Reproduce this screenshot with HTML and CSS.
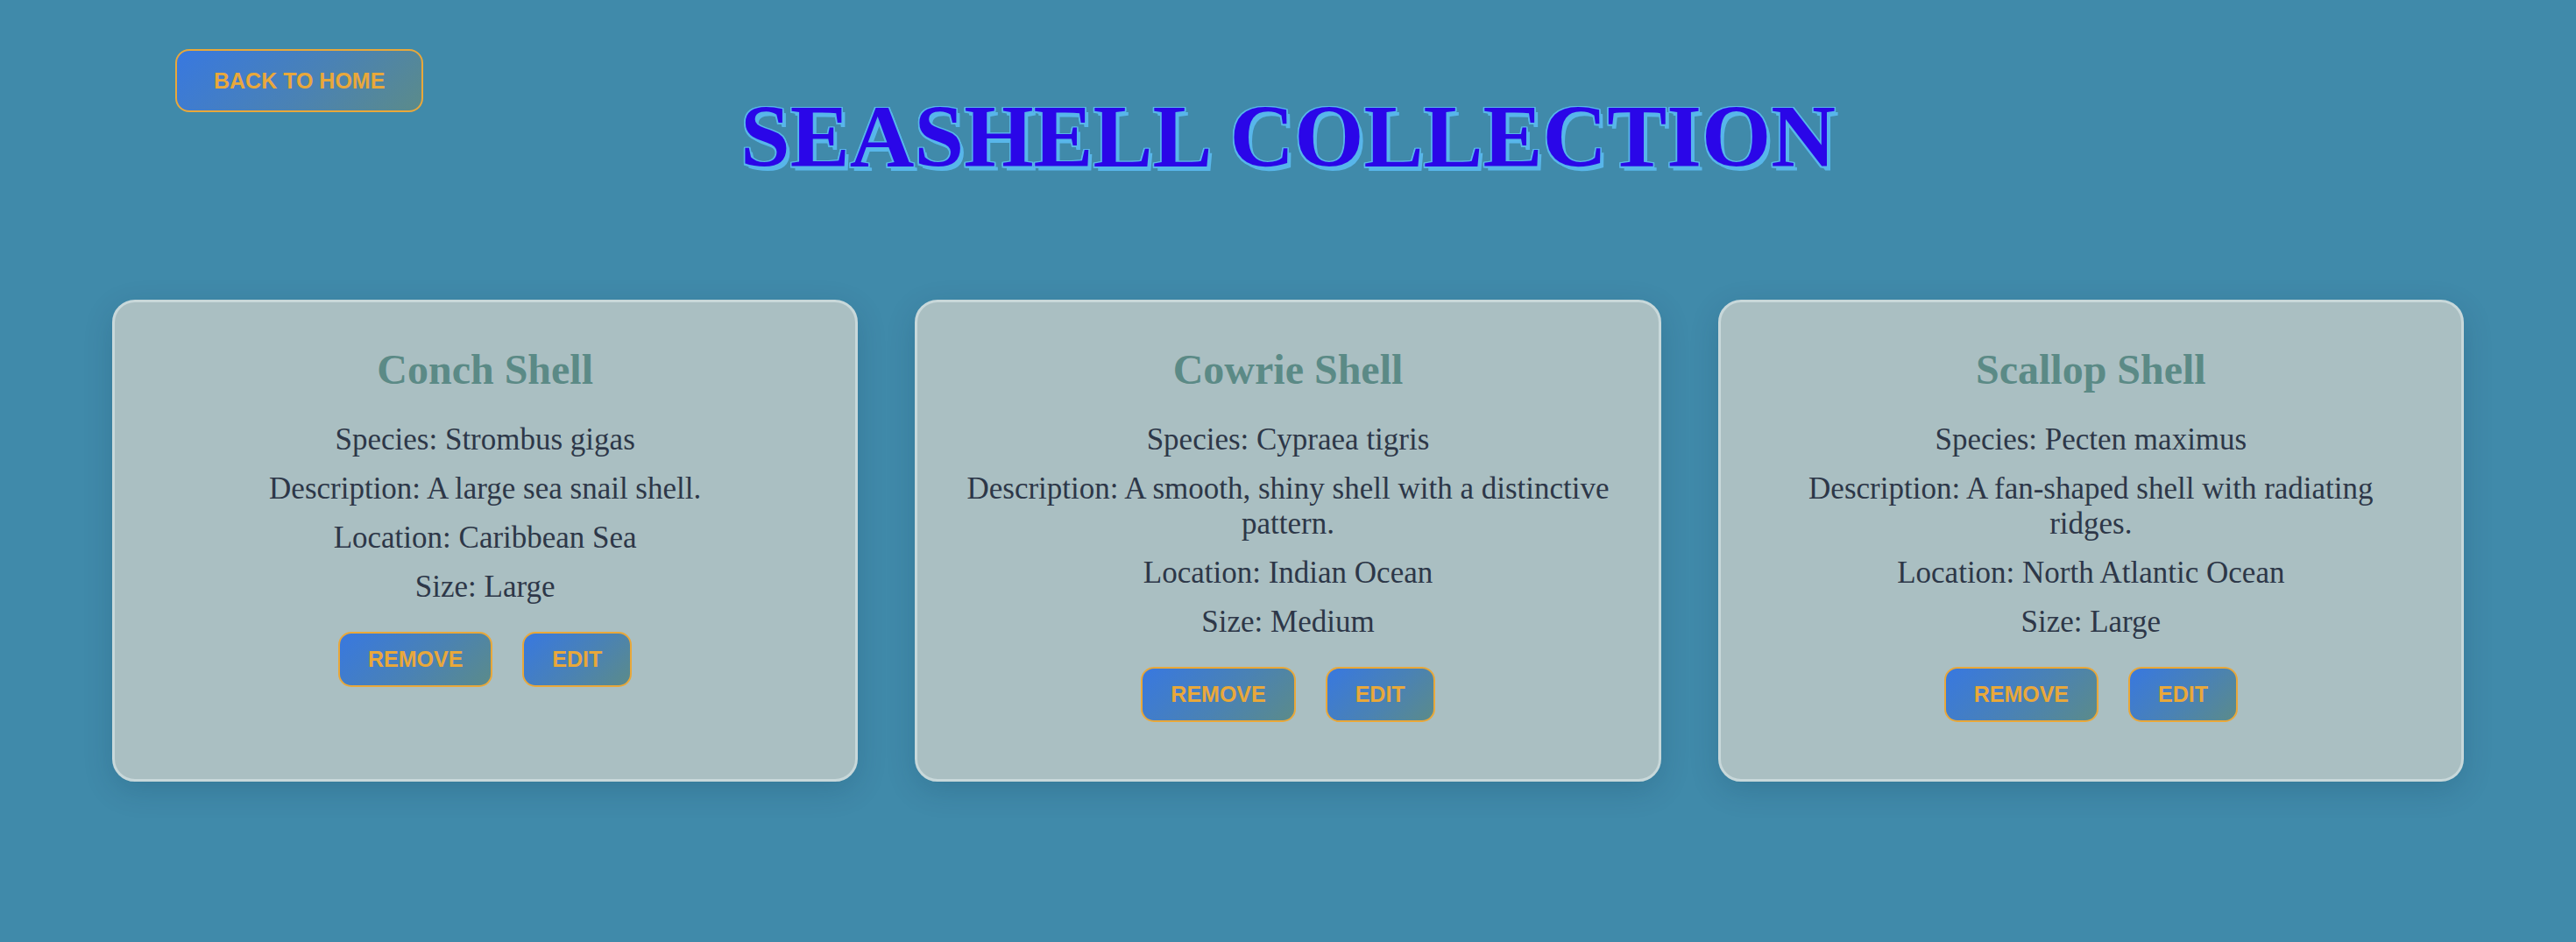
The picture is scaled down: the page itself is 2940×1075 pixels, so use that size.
FILE: index.html
```html
<!DOCTYPE html>
<html lang="en">
<head>
<meta charset="utf-8">
<title>Seashell Collection</title>
<link rel="stylesheet" href="styles.css">
</head>
<body>
<a class="back-btn" href="#">BACK TO HOME</a>
<header class="hero">
  <h1 class="hero-title">SEASHELL COLLECTION</h1>
</header>
<main class="shell-grid">
  <article class="shell-card">
    <h2 class="shell-name">Conch Shell</h2>
    <p class="shell-line">Species: Strombus gigas</p>
    <p class="shell-line">Description: A large sea snail shell.</p>
    <p class="shell-line">Location: Caribbean Sea</p>
    <p class="shell-line">Size: Large</p>
    <div class="shell-actions">
      <button class="action-btn">REMOVE</button>
      <button class="action-btn">EDIT</button>
    </div>
  </article>
  <article class="shell-card">
    <h2 class="shell-name">Cowrie Shell</h2>
    <p class="shell-line">Species: Cypraea tigris</p>
    <p class="shell-line">Description: A smooth, shiny shell with a distinctive pattern.</p>
    <p class="shell-line">Location: Indian Ocean</p>
    <p class="shell-line">Size: Medium</p>
    <div class="shell-actions">
      <button class="action-btn">REMOVE</button>
      <button class="action-btn">EDIT</button>
    </div>
  </article>
  <article class="shell-card">
    <h2 class="shell-name">Scallop Shell</h2>
    <p class="shell-line">Species: Pecten maximus</p>
    <p class="shell-line">Description: A fan-shaped shell with radiating ridges.</p>
    <p class="shell-line">Location: North Atlantic Ocean</p>
    <p class="shell-line">Size: Large</p>
    <div class="shell-actions">
      <button class="action-btn">REMOVE</button>
      <button class="action-btn">EDIT</button>
    </div>
  </article>
</main>
</body>
</html>
```
FILE: styles.css
```css
html, body {
  margin: 0;
  padding: 0;
}

body {
  background: #408aaa;
  min-height: 1075px;
  font-family: "Liberation Serif", "Times New Roman", serif;
  position: relative;
}

.back-btn {
  position: absolute;
  left: 200px;
  top: 56px;
  display: inline-block;
  padding: 19.5px 42px;
  border: 2.5px solid #e9a83a;
  border-radius: 16px;
  background: linear-gradient(135deg, #3878e0 0%, #4a82b4 55%, #5b8b8a 100%);
  color: #e9a83a;
  font-family: "Liberation Sans", Arial, sans-serif;
  font-weight: 700;
  font-size: 25px;
  line-height: normal;
  text-decoration: none;
}

.hero {
  padding-top: 97px;
  text-align: center;
}

.hero-title {
  margin: 0;
  font-family: "Liberation Serif", "Times New Roman", serif;
  font-weight: 700;
  font-size: 102px;
  line-height: normal;
  color: #2a06e8;
  text-shadow:
    -1.5px -1.5px 0 #58b6ea,
    1.5px -1.5px 0 #58b6ea,
    -1.5px 1.5px 0 #58b6ea,
    1.5px 1.5px 0 #58b6ea,
    0 -1.5px 0 #58b6ea,
    0 1.5px 0 #58b6ea,
    -1.5px 0 0 #58b6ea,
    1.5px 0 0 #58b6ea,
    4px 5px 0 #58b6ea;
}

.shell-grid {
  display: grid;
  grid-template-columns: repeat(3, 1fr);
  gap: 65px;
  padding: 128px 128px 0 128px;
}

.shell-card {
  background: #aabfc2;
  border: 3px solid #c8d8da;
  border-radius: 26px;
  padding: 48.5px 50px 65px;
  text-align: center;
  box-shadow: 0 10px 34px rgba(0, 40, 60, 0.16);
}

.shell-name {
  margin: 0 0 33px;
  font-size: 48px;
  font-weight: 700;
  line-height: normal;
  color: #5b8a86;
}

.shell-line {
  margin: 16px 0;
  font-size: 35px;
  line-height: normal;
  color: #2d3748;
}

.shell-actions {
  display: flex;
  justify-content: center;
  gap: 34px;
  margin-top: 31px;
}

.action-btn {
  padding: 15px 32px;
  border: 2.5px solid #e9a83a;
  border-radius: 15px;
  background: linear-gradient(135deg, #3878e0 0%, #4a82b4 55%, #5b8b8a 100%);
  color: #e9a83a;
  font-family: "Liberation Sans", Arial, sans-serif;
  font-weight: 700;
  font-size: 25px;
  line-height: normal;
  cursor: pointer;
}
```
